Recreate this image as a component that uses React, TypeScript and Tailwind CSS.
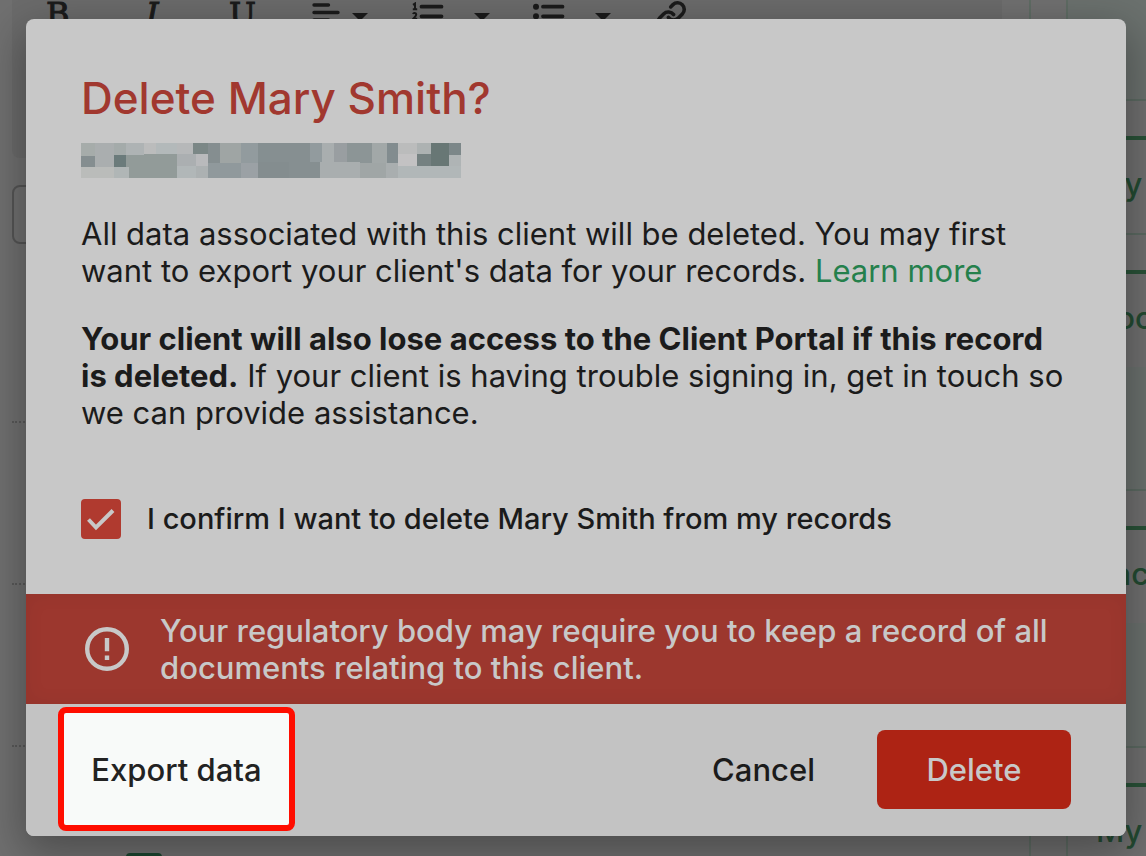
import React from "react";

type Block = [x: number, y: number, w: number, h: number, fill: string];

const redaction: Block[] = [
  [0, 0, 14, 13, "#a6acaa"], [14, 0, 19, 24, "#aaaeaf"], [33, 0, 12, 12, "#a4abaa"],
  [45, 0, 18, 12, "#aeb3b4"], [63, 0, 12, 11, "#bbbcbc"], [75, 0, 21, 11, "#b3b9ba"],
  [96, 0, 16, 11, "#b6b8b9"], [112, 0, 15, 11, "#7b8786"], [127, 0, 12, 20, "#858e90"],
  [139, 0, 21, 20, "#9fa5a4"], [160, 0, 17, 20, "#929b9e"], [177, 0, 12, 20, "#858f91"],
  [189, 0, 40, 20, "#868f91"], [229, 0, 12, 19, "#929b9e"], [241, 0, 12, 20, "#a9aeaf"],
  [253, 0, 13, 20, "#999ea1"], [266, 0, 25, 20, "#8c9596"], [291, 0, 15, 20, "#a2a8a8"],
  [306, 0, 11, 20, "#828c8f"], [317, 0, 19, 11, "#bbbcbc"], [336, 0, 14, 11, "#adb2b2"],
  [350, 0, 18, 23, "#687775"], [368, 0, 12, 12, "#7c8789"],
  [0, 13, 14, 11, "#858e90"], [33, 12, 12, 12, "#6b7b7b"], [45, 12, 18, 23, "#929b99"],
  [63, 11, 33, 24, "#929b99"], [96, 11, 19, 12, "#abafb1"], [115, 11, 12, 12, "#b9babc"],
  [317, 11, 19, 12, "#c3c2c3"], [336, 11, 14, 12, "#758181"], [368, 12, 12, 11, "#afb4b5"],
  [0, 24, 33, 11, "#babcba"], [33, 24, 15, 11, "#b0b6b6"], [96, 23, 19, 12, "#b1b7b8"],
  [115, 23, 12, 12, "#acb1b2"], [127, 20, 33, 15, "#90999c"], [160, 20, 17, 15, "#9ba1a5"],
  [177, 19, 31, 16, "#848d8f"], [208, 19, 31, 16, "#868f91"], [239, 19, 40, 16, "#a9aeaf"],
  [279, 20, 26, 15, "#a0a6a6"], [305, 20, 12, 15, "#a9aeaf"], [317, 23, 63, 12, "#b1b7b8"],
];

function Caret() {
  return (
    <svg width="16" height="8" viewBox="0 0 16 8" fill="currentColor" aria-hidden="true">
      <path d="M0 0H16L8 8Z" />
    </svg>
  );
}

function AlignIcon() {
  return (
    <svg width="28" height="24" viewBox="0 0 28 24" fill="none" stroke="currentColor" strokeWidth="3.400" strokeLinecap="round" aria-hidden="true">
      <path d="M2 3H16.500M2 10.500H26M2 18H16.500" />
    </svg>
  );
}

function NumberedIcon() {
  return (
    <svg width="32" height="26" viewBox="0 0 32 26" fill="none" stroke="currentColor" aria-hidden="true">
      <path d="M9.500 4.700H29.500M9.500 14.300H29.500M9.500 24H29.500" strokeWidth="3.800" strokeLinecap="round" />
      <path d="M1 2.800L3 1.500V7.200M.8 7.200H5.200M1 12C1.500 10.500 4.300 10.700 4.200 12.500C4.200 14 2.200 15.500 1.200 16.800H5.200" strokeWidth="2" />
    </svg>
  );
}

function BulletIcon() {
  return (
    <svg width="32" height="26" viewBox="0 0 32 26" fill="none" stroke="currentColor" strokeWidth="3.800" strokeLinecap="round" aria-hidden="true">
      <path d="M10 4.700H29.500M10 14.300H29.500M10 24H29.500" />
      <path d="M3 4.700H3.010M3 14.300H3.010M3 24H3.010" strokeWidth="6" />
    </svg>
  );
}

function ChainIcon() {
  return (
    <svg width="32" height="32" viewBox="0 0 24 24" fill="none" stroke="currentColor" strokeWidth="2.700" strokeLinecap="round" strokeLinejoin="round" aria-hidden="true">
      <path d="M10 13a5 5 0 0 0 7.540.540l3-3a5 5 0 0 0-7.070-7.070l-1.720 1.710" />
      <path d="M14 11a5 5 0 0 0-7.540-.540l-3 3a5 5 0 0 0 7.070 7.070l1.710-1.710" />
    </svg>
  );
}

function AlertIcon() {
  return (
    <svg width="44" height="44" viewBox="0 0 44 44" className="shrink-0" aria-hidden="true">
      <circle cx="22" cy="22" r="19.800" fill="none" stroke="currentColor" strokeWidth="4.400" />
      <path d="M19.800 11H24.200V24.200H19.800ZM19.800 28.600H24.200V33H19.800Z" fill="currentColor" />
    </svg>
  );
}

function SidebarItem({ label, gap }: { label: string; gap: string }) {
  return (
    <div>
      <a href="#" className="flex h-[97px] items-center overflow-hidden border-t-4 border-[#295238] pb-1 pl-7 text-[31px] font-medium text-[#234b32]">
        {label}
      </a>
      <div className={gap} />
    </div>
  );
}

export default function App() {
  return (
    <div className="relative min-h-screen overflow-hidden bg-[#707070] font-['Inter',sans-serif] text-[#1b1b1b]">
      <div className="absolute inset-0 flex overflow-hidden" aria-hidden="true">
        <div className="flex-1 pl-3">
          <div className="mr-[27px] h-[158px] rounded-b-lg bg-[#6b6b6b] pl-[34px]">
            <div className="flex items-start font-['DejaVu_Serif',serif] text-[32px] leading-7">
              <span className="w-[100px] [-webkit-text-stroke:1px]">B</span>
              <span className="w-[83px] italic [-webkit-text-stroke:1px]">I</span>
              <span className="w-[83px] [-webkit-text-stroke:1px]">U</span>
              <span className="flex w-[100px] items-start gap-3 pt-0.5"><AlignIcon /><span className="pt-[11px]"><Caret /></span></span>
              <span className="flex w-[121px] items-start gap-[30px] pt-0.5"><NumberedIcon /><span className="pt-[11px]"><Caret /></span></span>
              <span className="flex w-[122px] items-start gap-[30px] pt-0.5"><BulletIcon /><span className="pt-[11px]"><Caret /></span></span>
              <ChainIcon />
            </div>
          </div>
          <div className="mt-[27px] mr-7 h-[59px] rounded-lg border-2 border-[#555]" />
          <div className="mt-[177px] mr-7 border-t-2 border-dotted border-[#595959]" />
          <div className="mt-40 mr-7 border-t-2 border-dotted border-[#595959]" />
          <div className="mt-40 mr-7 border-t-2 border-dotted border-[#595959]" />
          <div className="mt-[106px] ml-[114px] h-10 w-9 rounded bg-[#1c4630]" />
        </div>
        <div className="w-[39px] border-x-2 border-[#5f6c64]" />
        <div className="w-[78px]">
          <div className="h-[101px] border-b-2 border-[#5c6a62] bg-[#6b716e]" />
          <div className="h-[35px]" />
          <SidebarItem label="My" gap="h-[37px] border-t-2 border-[#5c6a62]" />
          <SidebarItem label="Book" gap="mb-[35px] h-[124px] border-b-2 border-[#5c6a62] bg-[#6b716e]" />
          <SidebarItem label="Fac" gap="mb-[35px] h-[125px] border-b-2 border-[#5c6a62] bg-[#6b716e]" />
          <SidebarItem label="My" gap="h-4" />
        </div>
      </div>

      <div className="relative flex justify-center pt-[19px] pr-5 pb-5 pl-[26px]">
        <section role="dialog" aria-labelledby="delete-title" className="w-full rounded-lg bg-[#c8c8c8] shadow-[0_14px_44px_4px_rgba(0,0,0,0.32)]">
          <div className="px-[55px] pt-[55px] pb-[55px]">
            <h1 id="delete-title" className="text-[44px] leading-12 font-medium text-[#a1382f]">Delete Mary Smith?</h1>
            <svg width="380" height="35" viewBox="0 0 380 35" shapeRendering="crispEdges" className="mt-[21px]" aria-hidden="true">
              {redaction.map(([x, y, w, h, fill]) => (
                <rect key={`${x}-${y}`} x={x} y={y} width={w} height={h} fill={fill} />
              ))}
            </svg>
            <p className="mt-[37px] text-[31px] leading-[37px]">
              All data associated with this client will be deleted. You may first<br />
              want to export your client's data for your records.{" "}
              <a href="#" className="text-[#25804c]">Learn more</a>
            </p>
            <p className="mt-[31px] text-[31px] leading-[37px]">
              <strong className="font-bold">Your client will also lose access to the Client Portal if this record<br />is deleted.</strong>{" "}
              If your client is having trouble signing in, get in touch so<br />
              we can provide assistance.
            </p>
            <div className="mt-[68px] flex items-center gap-[26px]">
              <span className="grid size-10 shrink-0">
                <input id="confirm" type="checkbox" defaultChecked className="peer col-start-1 row-start-1 size-10 appearance-none rounded border-2 border-[#b03a2f] checked:bg-[#b03a2f]" />
                <svg viewBox="0 0 40 40" className="pointer-events-none col-start-1 row-start-1 hidden size-10 peer-checked:block" aria-hidden="true">
                  <path d="M7.500 20.500L15 28.500L32 11.500" fill="none" stroke="#c8c8c8" strokeWidth="4" />
                </svg>
              </span>
              <label htmlFor="confirm" className="pb-0.5 text-[29px] leading-[37px] font-medium">I confirm I want to delete Mary Smith from my records</label>
            </div>
          </div>

          <div role="alert" className="flex items-center gap-[31px] bg-[#9c372e] py-[18px] pr-[55px] pl-[59px] text-[#c8c8c8] shadow-[inset_0_0_20px_rgba(0,0,0,0.06)]">
            <AlertIcon />
            <p className="text-[31px] leading-[37px] font-medium">
              Your regulatory body may require you to keep a record of all<br />documents relating to this client.
            </p>
          </div>

          <div className="flex items-center rounded-b-lg bg-[#c3c3c3] pt-[3px] pr-[55px] pb-[5px] pl-8 text-[31px] font-medium">
            <button type="button" className="mr-auto h-[124px] w-[237px] rounded-lg border-6 border-[#ff0d00] bg-[#f8faf9] pt-0.5 text-[#222]">Export data</button>
            <button type="button" className="mr-[62px] pt-0.5">Cancel</button>
            <button type="button" className="h-[79px] w-[194px] rounded-lg bg-[#ad2314] pt-0.5 text-[#c8c8c8]">Delete</button>
          </div>
        </section>
      </div>
    </div>
  );
}
